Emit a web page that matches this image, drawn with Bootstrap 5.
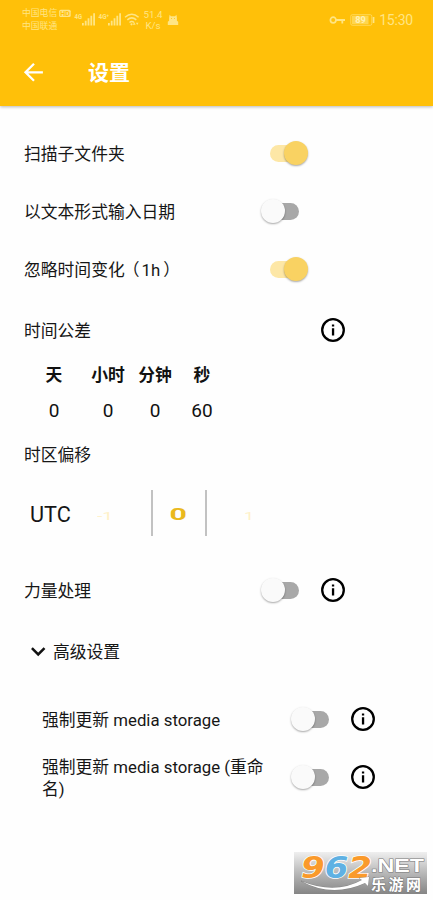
<!DOCTYPE html>
<html lang="zh-CN">
<head>
    <meta charset="UTF-8">
    <meta name="viewport" content="width=device-width, initial-scale=1.0">
    <title>设置</title>
    <link rel="stylesheet" href="https://cdn.jsdelivr.net/npm/bootstrap@5.3.0/dist/css/bootstrap.min.css">
    <style>
        body {
            height: 900px;
            overflow: hidden;
            position: relative;
            background: #fefefe;
            color: #161616;
            font-family: Roboto, "Noto Sans CJK SC", sans-serif;
            font-size: 16.8px;
            line-height: 22px;
        }
        svg { display: block; flex: none; }
        .app-header { height: 106px; background: #ffc009; box-shadow: 0 1px 3px rgba(0, 0, 0, .28); }
        .status-bar { height: 40px; padding: 0 20px 0 22px; color: #ffe584; }
        .carriers { font-size: 8.8px; line-height: 13px; width: 36px; white-space: nowrap; }
        .speed { font-size: 9.8px; line-height: 11px; width: 20px; margin-left: 3px; text-align: center; }
        .clock { font-size: 14px; letter-spacing: -.2px; }
        .title-bar { height: 66px; padding-left: 22px; }
        .title-bar h1 { font-size: 21px; font-weight: 700; margin: 0 0 0 42px; line-height: 30px; }

        .settings { padding-top: 18px; }
        .setting { height: 58px; padding-left: 24px; }
        .setting-label { width: 236px; padding-top: 1px; }
        .hour { margin: 0 3px 0 2px; }
        .tall { height: 64px; }
        .sub { padding-left: 42px; }
        .sub .setting-label { width: 248px; padding-right: 22px; }

        /* material style switch */
        .toggle { width: 49px; height: 25px; position: relative; flex: none; margin-right: 12px; }
        .toggle::before { content: ""; position: absolute; left: 10px; top: 4px; width: 29px; height: 17px; border-radius: 9px; background: #a8a8a8; }
        .toggle::after { content: ""; position: absolute; left: 1px; top: 0; width: 24px; height: 24px; border-radius: 50%; background: #fafafa; box-shadow: 0 1px 2px rgba(0, 0, 0, .35); }
        .toggle.on::before { background: #fde7a6; }
        .toggle.on::after { left: 24px; background: #f9d262; }

        .tolerance { width: 202px; margin: 2px 0 0 24px; text-align: center; color: #111; table-layout: fixed; }
        .tolerance th { height: 22px; padding: 0; font-size: 16.8px; }
        .tolerance td { height: 50px; padding: 0; font-size: 19px; }
        .offset-title { height: 36px; padding: 2px 0 0 24px; }
        .offset-picker { height: 46px; margin-top: 18px; padding-left: 30px; }
        .utc { width: 67px; padding-top: 3px; font-size: 21.7px; }
        .picked { width: 56px; height: 46px; border: solid #c2c2c2; border-width: 0 2px; }
        .advanced { height: 64px; padding-left: 30px; margin-bottom: 7px; }
        .advanced span { padding-top: 2px; margin-left: 7px; }
        .power { margin-top: 25px; }

        .watermark { position: absolute; left: 294px; top: 852px; overflow: visible; }
    </style>
</head>
<body>
    <!-- shared icon -->
    <svg width="0" height="0" class="position-absolute">
        <symbol id="info" viewBox="0 0 24 24">
            <circle cx="12" cy="12" r="10.8" fill="none" stroke="#000" stroke-width="2.3"/>
            <path d="M10.9 6.4h2.3v2.2h-2.3zM10.9 10.3h2.3v7.1h-2.3z" fill="#000"/>
        </symbol>
    </svg>

    <header class="app-header position-relative">
        <div class="status-bar d-flex align-items-center justify-content-between">
            <div class="d-flex align-items-center">
                <div class="carriers">中国电信<br>中国联通</div>
                <svg width="82" height="26" viewBox="58 7 82 26" fill="#ffe584">
                    <rect x="59.2" y="9.7" width="11.5" height="7.2" rx="1.5"/>
                    <text x="60.2" y="15.8" font-size="6.5" font-weight="700" fill="#ffc009" textLength="9.5" lengthAdjust="spacingAndGlyphs">HD</text>
                    <text x="74.5" y="18.6" font-size="6.3" font-weight="700" textLength="7.5" lengthAdjust="spacingAndGlyphs">4G</text>
                    <path d="M82 23h1.8v2.5H82zM84.8 20.7h1.8v4.8h-1.8zM87.6 18.3h1.8v7.2h-1.8zM90.4 15.8h1.8v9.7h-1.8zM93.2 13.3H95v12.2h-1.8z"/>
                    <text x="98.5" y="18.6" font-size="6.3" font-weight="700" textLength="10.5" lengthAdjust="spacingAndGlyphs">4G⁺</text>
                    <path d="M108 23h1.8v2.5H108zM110.8 20.7h1.8v4.8h-1.8zM113.6 18.3h1.8v7.2h-1.8zM116.4 15.8h1.8v9.7h-1.8zM119.2 13.3h1.8v12.2h-1.8z"/>
                    <g fill="none" stroke="#ffe584" stroke-width="1.5">
                        <path d="M125 17.2q6.8-6 13.6 0M127.3 19.9q4.5-4 9 0M129.5 22.5q2.3-2 4.6 0"/>
                    </g>
                    <circle cx="131.5" cy="24.3" r="1.1"/>
                    <path d="M134.2 22.3l1.4 2.5h-2.8zM137.2 25l-1.3-2.2h2.6z"/>
                </svg>
                <div class="speed">51.4<br>K/s</div>
                <svg width="12" height="12" viewBox="0 0 12 12" fill="#ffe584" class="ms-1">
                    <path d="M2.6.8L4 2.3h4L9.4.8l.5 3v2.9l1.3 1V11H.8V7.7l1.3-1V3.8z"/>
                    <path d="M4 4.2h1v.8H4zM7 4.2h1V5H7z" fill="#ffc009"/>
                </svg>
            </div>
            <div class="d-flex align-items-center">
                <svg width="17" height="10" viewBox="0 0 17 10" class="me-1">
                    <circle cx="4.2" cy="5" r="2.8" fill="none" stroke="#ffe584" stroke-width="1.7"/>
                    <path d="M7 5h9M13.3 5v3.5" fill="none" stroke="#ffe584" stroke-width="1.8"/>
                </svg>
                <svg width="25" height="12" viewBox="0 0 25 12">
                    <rect x=".8" y=".7" width="21" height="10.6" rx="1.5" fill="none" stroke="#ffdd6a" stroke-width=".8"/>
                    <rect x="2" y="1.8" width="16.5" height="8.4" fill="#ffd64f"/>
                    <path d="M22.7 3h1.7v6h-1.7z" fill="#ffe584"/>
                    <text x="5.2" y="9.4" font-size="9.3" font-weight="700" fill="#fff1b5">89</text>
                </svg>
                <span class="clock ms-1">15:30</span>
            </div>
        </div>
        <div class="title-bar d-flex align-items-center text-white">
            <svg width="24" height="24" viewBox="0 0 24 24" fill="none" stroke="#fff" stroke-width="2.3">
                <path d="M20.9 11.3H3.8M12 2.8l-8.5 8.5 8.5 8.5"/>
            </svg>
            <h1>设置</h1>
        </div>
    </header>

    <main class="settings">
        <div class="setting d-flex align-items-center">
            <div class="setting-label">扫描子文件夹</div>
            <span class="toggle on" role="switch"></span>
        </div>
        <div class="setting d-flex align-items-center">
            <div class="setting-label">以文本形式输入日期</div>
            <span class="toggle" role="switch"></span>
        </div>
        <div class="setting d-flex align-items-center">
            <div class="setting-label">忽略时间变化<span style="margin-left: -2px">（</span><span class="hour">1h</span>）</div>
            <span class="toggle on" role="switch"></span>
        </div>
        <div class="setting tall d-flex align-items-center">
            <div class="setting-label me-5">时间公差</div>
            <svg width="24" height="24" style="margin-left: 13px"><use href="#info"/></svg>
        </div>

        <table class="tolerance">
            <colgroup><col style="width: 60px"><col style="width: 48px"><col style="width: 46px"><col style="width: 48px"></colgroup>
            <tr><th>天</th><th>小时</th><th>分钟</th><th>秒</th></tr>
            <tr><td>0</td><td>0</td><td>0</td><td>60</td></tr>
        </table>

        <div class="offset-title d-flex align-items-center">时区偏移</div>
        <div class="offset-picker d-flex align-items-center">
            <div class="utc">UTC</div>
            <svg width="54" height="46" viewBox="0 0 54 46">
                <text x="0" y="30" font-size="11" fill="#fff1c9" textLength="16" lengthAdjust="spacingAndGlyphs">-1</text>
            </svg>
            <div class="picked d-flex align-items-center justify-content-center">
                <svg width="22" height="46" viewBox="0 0 22 46">
                    <text x="1.5" y="30" font-size="17" font-weight="700" fill="#eab91e" textLength="17.4" lengthAdjust="spacingAndGlyphs">0</text>
                </svg>
            </div>
            <svg width="54" height="46" viewBox="0 0 54 46">
                <text x="37" y="30" font-size="11" fill="#fff1c9" textLength="10" lengthAdjust="spacingAndGlyphs">1</text>
            </svg>
        </div>

        <div class="setting power d-flex align-items-center">
            <div class="setting-label">力量处理</div>
            <span class="toggle" role="switch"></span>
            <svg width="24" height="24"><use href="#info"/></svg>
        </div>
        <div class="advanced d-flex align-items-center">
            <svg width="16" height="16" viewBox="0 0 16 16" fill="none" stroke="#111" stroke-width="2.5">
                <path d="M1.9 5.2l6.3 6.3 6.3-6.3"/>
            </svg>
            <span>高级设置</span>
        </div>
        <div class="setting sub d-flex align-items-center">
            <div class="setting-label">强制更新 media storage</div>
            <span class="toggle" role="switch"></span>
            <svg width="24" height="24"><use href="#info"/></svg>
        </div>
        <div class="setting sub d-flex align-items-center">
            <div class="setting-label">强制更新 media storage (重命名)</div>
            <span class="toggle" role="switch"></span>
            <svg width="24" height="24"><use href="#info"/></svg>
        </div>
    </main>

    <!-- site badge over the lower right corner -->
    <svg class="watermark" width="133" height="42" viewBox="0 0 133 42" font-family="'Liberation Sans', 'Noto Sans CJK SC', sans-serif" font-weight="700">
        <defs>
            <linearGradient id="badge-bg" x1="0" y1="0" x2="0" y2="1">
                <stop offset="0" stop-color="#efefef"/>
                <stop offset=".5" stop-color="#b8b8b8"/>
                <stop offset="1" stop-color="#858585"/>
            </linearGradient>
        </defs>
        <rect width="133" height="42" fill="url(#badge-bg)"/>
        <text x="7" y="25.5" font-family="'DejaVu Sans', sans-serif" font-style="italic" font-size="31" stroke="#fff" stroke-width="1.6" paint-order="stroke" textLength="71" lengthAdjust="spacingAndGlyphs"><tspan fill="#fa9a2b">9</tspan><tspan fill="#5fb1e3">6</tspan><tspan fill="#fa9a2b">2</tspan></text>
        <g fill="#fff" stroke="#777" stroke-width="1" paint-order="stroke">
            <text x="77" y="20" font-size="19" textLength="53" lengthAdjust="spacingAndGlyphs">.NET</text>
            <text x="77" y="38" font-size="15" textLength="50">乐游网</text>
            <path d="M7 29q34 14 61-1l-3-2 10-1-1 9-3-3Q38 46 7 29z" stroke-width=".6"/>
        </g>
    </svg>

    <script src="https://cdn.jsdelivr.net/npm/bootstrap@5.3.0/dist/js/bootstrap.bundle.min.js"></script>
</body>
</html>
